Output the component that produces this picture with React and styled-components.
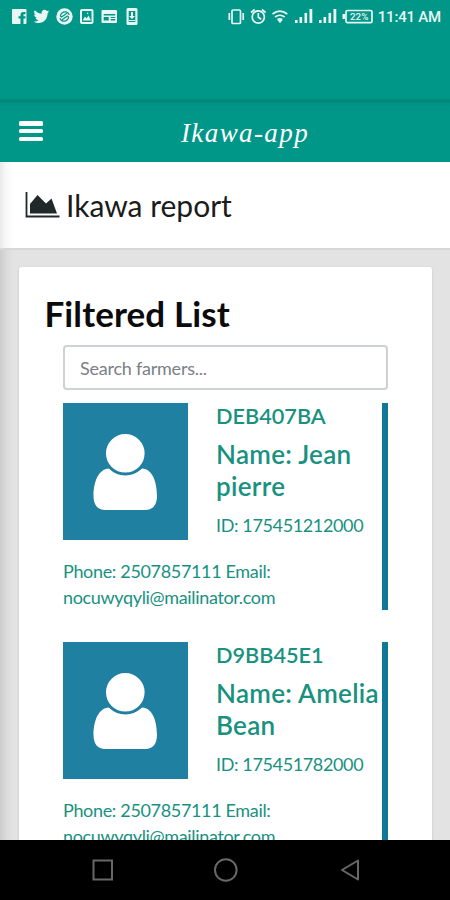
import React from 'react';
import styled, { createGlobalStyle } from 'styled-components';

const Global = createGlobalStyle`
  * { box-sizing: border-box; }
  body { margin: 0; font-family: Lato, sans-serif; background: #e3e3e3; }
  h1, h2, h3, h4, p { margin: 0; }
`;

const Screen = styled.div`
  width: 450px;
  height: 900px;
  display: flex;
  flex-direction: column;
  overflow: hidden;
  background: #e3e3e3;
`;

const StatusBar = styled.div`
  height: 102px;
  flex: none;
  padding: 6px 9px 0 11px;
  display: flex;
  align-items: flex-start;
  justify-content: space-between;
  color: #e9f6f4;
  background: linear-gradient(#009688 0 98px, #00897c 100px, #008074 102px);
`;

const StatusIcons = styled.svg`
  display: block;
  height: 22px;
  width: ${(p) => p.$width}px;
`;

const StatusRight = styled.div`
  display: flex;
  align-items: flex-start;
  gap: 5px;
`;

const Clock = styled.span`
  font: 500 15px/23px Roboto, sans-serif;
  letter-spacing: -0.2px;
  white-space: nowrap;
`;

const Header = styled.header`
  height: 60px;
  flex: none;
  display: grid;
  grid-template-columns: 60px 1fr 20px;
  align-items: center;
  background: linear-gradient(#008f82, #009688 4px);
  color: #fff;
`;

const MenuButton = styled.button`
  width: 24px;
  height: 20px;
  margin: -2px 0 0 19px;
  padding: 0;
  border: 0;
  background: none;
  display: flex;
  flex-direction: column;
  justify-content: space-between;
`;

const MenuLine = styled.span`
  width: 24px;
  height: 4.5px;
  border-radius: 1.5px;
  background: #fff;
`;

const Brand = styled.h1`
  text-align: center;
  font: italic 400 27px/40px "Liberation Serif", serif;
  letter-spacing: 1.4px;
  padding-top: 2px;
  white-space: nowrap;
`;

const Content = styled.main`
  flex: 1;
  min-height: 0;
  overflow: hidden;
  display: flex;
  flex-direction: column;
  box-shadow: inset 13px 0 12px -10px rgba(0, 0, 0, 0.14);
`;

const TitleBar = styled.div`
  height: 88px;
  flex: none;
  display: flex;
  align-items: center;
  padding-left: 25px;
  gap: 6px;
  border-bottom: 2px solid #d8d8d8;
  background: linear-gradient(90deg, #e9e9e9, #f8f8f8 6px, #fff 14px);
`;

const ChartIcon = styled.svg`
  width: 35px;
  height: 26px;
  display: block;
`;

const Title = styled.h2`
  font-size: 30px;
  line-height: 40px;
  font-weight: 400;
  color: #1b1b1b;
  white-space: nowrap;
`;

const Card = styled.section`
  flex: none;
  margin: 17px 18px 0 19px;
  height: 640px;
  padding: 24px 44px 0 25.5px;
  border-radius: 3px;
  background: #fff;
  box-shadow: 0 1px 3px rgba(0, 0, 0, 0.13);
`;

const CardTitle = styled.h2`
  font-size: 35px;
  line-height: 44px;
  height: 54px;
  font-weight: 700;
  letter-spacing: 0.1px;
  color: #0b0b0b;
  white-space: nowrap;
`;

const Search = styled.input`
  display: block;
  width: 325px;
  height: 45px;
  margin: 0 0 13px 18.5px;
  padding: 0 15px;
  border: 2px solid #cdd0d5;
  border-radius: 4px;
  background: #fff;
  font: 400 18px Lato, sans-serif;
  letter-spacing: -0.23px;
  outline: 0;
  &::placeholder { color: #7b8086; opacity: 1; }
`;

const Farmer = styled.article`
  width: 325px;
  height: 207px;
  margin: 0 0 32px 18.5px;
  border-right: 6px solid #107796;
  color: #18917f;
`;

const Summary = styled.div`
  display: flex;
  gap: 28px;
  height: 155px;
`;

const Avatar = styled.svg`
  width: 125px;
  height: 137px;
  flex: none;
  display: block;
  background: #2080a2;
`;

const Details = styled.div`
  width: 166px;
`;

const Code = styled.h4`
  font-size: 21.7px;
  line-height: 26px;
  font-weight: 600;
  white-space: nowrap;
`;

const Name = styled.h3`
  margin-top: 10px;
  font-size: 26px;
  line-height: 31.5px;
  font-weight: 600;
  letter-spacing: 0.3px;
  white-space: nowrap;
`;

const FarmerId = styled.p`
  margin-top: 10px;
  font-size: 18px;
  line-height: 26px;
  letter-spacing: -0.37px;
  white-space: nowrap;
`;

const Contact = styled.p`
  font-size: 18px;
  line-height: 26px;
  letter-spacing: -0.34px;
  white-space: nowrap;
`;

const NavBar = styled.nav`
  height: 60px;
  flex: none;
  display: flex;
  justify-content: space-between;
  align-items: center;
  padding: 0 88px 0 90px;
  background: #000;
`;

const NavIcon = styled.svg`
  width: 24px;
  height: 26px;
  display: block;
  fill: none;
  stroke: #686868;
  stroke-width: 2;
`;

const farmers = [
  { code: 'DEB407BA', first: 'Jean', last: 'pierre', id: '175451212000' },
  { code: 'D9BB45E1', first: 'Amelia', last: 'Bean', id: '175451782000' },
];

function NotificationIcons() {
  return (
    <StatusIcons $width={130} viewBox="11 6 130 22" fill="currentColor">
      <path fillRule="evenodd" d="M13 9h12.500q1 0 1 1v13q0 1-1 1h-2v-5.500h2v-2.200h-2v-2h2v-2.200h-2q-3 0-3 3v1.200h-2v2.200h2v5.500h-7.500q-1 0-1-1V10q0-1 1-1z" />
      <path d="M49.500 11.300q-1 .5-2 .6 1-.6 1.500-1.600-1 .5-2 .7c-2.500-2.700-6.200-.5-5.300 2.700q-4.200-.2-7-3.400c-1.200 2-.5 3.600 1 4.600q-.8 0-1.500-.4c0 1.600 1 2.900 2.700 3.300q-.8.2-1.500.1.700 2 3.100 2.300-2.200 1.600-4.800 1.300c6.600 4.100 13.900-.3 13.900-8.200z" />
      <circle cx="64.500" cy="16.500" r="8.200" />
      <g fill="none" stroke="#009688" strokeWidth="1.200" strokeLinecap="round">
        <path d="M69 14.500c-1-3-5-3.500-7-1.500-2 1.800-2 3.500-.5 4l5-3.500M60 18.500c1 3 5 3.500 7 1.500 2-1.800 2-3.500.5-4l-5 3.500" />
      </g>
      <path fillRule="evenodd" d="M82 9h9.500q2 0 2 2v11q0 2-2 2H82q-2 0-2-2V11q0-2 2-2zm0 2v11h9.500V11z" />
      <path d="M82.500 20.500l2.500-4 1.500 2 2-3 2.500 5zM87.500 12l1 1.800-1.600.4z" />
      <path fillRule="evenodd" d="M102.500 10h13.500q1 0 1 1v11q0 1-1 1h-13.500q-1 0-1-1V11q0-1 1-1zm1.200 4v1.500h11.500V14zm0 3v3.500h5V17zm7 0v1h4.500v-1zm0 2v1.500h4.500V19z" />
      <path fillRule="evenodd" d="M128 8h8q1.500 0 1.500 1.500v14q0 1.500-1.500 1.500h-8q-1.500 0-1.500-1.500v-14Q126.500 8 128 8zm.7 3v11h6.600V11z" />
      <path d="M131 12h2v4h2l-3 3-3-3h2zM129 20h6v1h-6z" />
    </StatusIcons>
  );
}

function DeviceIcons() {
  return (
    <StatusIcons $width={145} viewBox="227 6 145 22" fill="currentColor">
      <g fill="none" stroke="currentColor" strokeWidth="1.700">
        <rect x="231" y="10" width="8.500" height="13.500" rx="1" />
        <path d="M228.300 13v7M242.200 13v7" />
        <circle cx="257.300" cy="17" r="6.100" />
        <path d="M250 12.500l3.700-3M264.600 12.500l-3.700-3M257.300 13v4.300l3 2" />
        <path d="M271.500 14q7.300-5.600 14.800 0M274 17q4.800-3.500 9.700 0M276.500 19.800q2.400-1.800 4.800 0" />
        <rect x="345" y="10.500" width="26" height="12.200" rx="1.500" />
      </g>
      <path d="M276.500 20h5l-2.500 3.300zM341.500 14h2.700v5h-2.700z" />
      <path d="M294 20h2.600v3H294zM298.500 17h2.600v6h-2.600zM303.500 13h2.600v10h-2.600zM308.500 9h2.800v14h-2.800zM318 20h2.600v3H318zM322.500 17h2.600v6h-2.600zM327.500 13h2.600v10h-2.600zM332.500 9h2.800v14h-2.800z" />
      <text x="349" y="20.100" fontFamily="Roboto, sans-serif" fontSize="9.800" fontWeight="500">22%</text>
    </StatusIcons>
  );
}

function FarmerRow({ farmer }) {
  return (
    <Farmer>
      <Summary>
        <Avatar viewBox="0 0 125 137">
          <path fill="#fff" d="M46 65.500C35 66 30.500 80 30.500 93c0 9 4.500 14 11.500 14h40.500c7 0 11.500-5 11.500-14 0-13-4-27-15-27.500-9.500 8-23.500 8-33 0z" />
          <circle cx="62.300" cy="50.300" r="20.800" fill="#fff" stroke="#2080a2" strokeWidth="3" />
        </Avatar>
        <Details>
          <Code>{farmer.code}</Code>
          <Name>Name: {farmer.first}<br />{farmer.last}</Name>
          <FarmerId>ID: {farmer.id}</FarmerId>
        </Details>
      </Summary>
      <Contact>Phone: 2507857111 Email:<br />nocuwyqyli@mailinator.com</Contact>
    </Farmer>
  );
}

export default function App() {
  return (
    <Screen>
      <Global />
      <StatusBar>
        <NotificationIcons />
        <StatusRight>
          <DeviceIcons />
          <Clock>11:41 AM</Clock>
        </StatusRight>
      </StatusBar>
      <Header>
        <MenuButton aria-label="Menu">
          <MenuLine />
          <MenuLine />
          <MenuLine />
        </MenuButton>
        <Brand>Ikawa-app</Brand>
      </Header>
      <Content>
        <TitleBar>
          <ChartIcon viewBox="0 0 35 26">
            <path d="M1.500 0v24.500h33" fill="none" stroke="#222829" strokeWidth="1.800" />
            <path d="M5 21.500V12l7.500-9 8.500 8.500 5.500-5 5.500 15z" fill="#20282a" />
          </ChartIcon>
          <Title>Ikawa report</Title>
        </TitleBar>
        <Card>
          <CardTitle>Filtered List</CardTitle>
          <Search placeholder="Search farmers..." />
          {farmers.map((farmer) => (
            <FarmerRow key={farmer.code} farmer={farmer} />
          ))}
        </Card>
      </Content>
      <NavBar>
        <NavIcon viewBox="0 0 24 26"><rect x="3.500" y="3.500" width="18.500" height="19" /></NavIcon>
        <NavIcon viewBox="0 0 24 26"><circle cx="11.800" cy="13" r="10.800" /></NavIcon>
        <NavIcon viewBox="0 0 24 26"><path d="M20 3.500v19L4 13z" strokeLinejoin="round" /></NavIcon>
      </NavBar>
    </Screen>
  );
}
